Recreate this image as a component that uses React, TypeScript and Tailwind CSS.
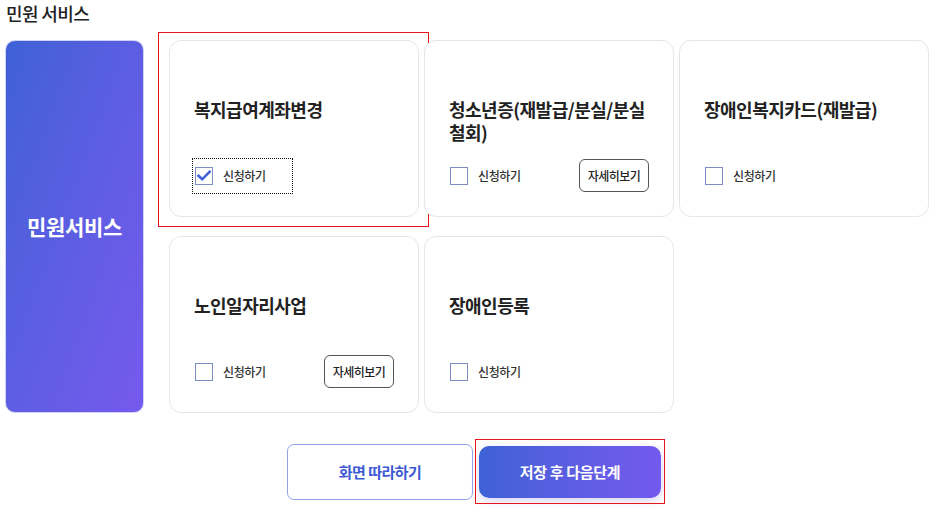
import { useState } from "react";

type Service = {
  id: string;
  title: string;
  detail: boolean;
};

const services: Service[] = [
  { id: "s1", title: "복지급여계좌변경", detail: false },
  { id: "s2", title: "청소년증(재발급/분실/분실철회)", detail: true },
  { id: "s3", title: "장애인복지카드(재발급)", detail: false },
  { id: "s4", title: "노인일자리사업", detail: true },
  { id: "s5", title: "장애인등록", detail: false },
];

function CheckBox({ checked }: { checked: boolean }) {
  return (
    <span className="flex h-[18px] w-[18px] items-center justify-center border border-[#7d8cc2] bg-white">
      {checked && (
        <svg width="14" height="12" viewBox="0 0 14 12" fill="none">
          <path
            d="M1.5 5.8 L5.2 9.3 L12.6 1.8"
            stroke="#3f62d8"
            strokeWidth="2.6"
            strokeLinecap="square"
          />
        </svg>
      )}
    </span>
  );
}

export default function App() {
  const [checked, setChecked] = useState<Record<string, boolean>>({ s1: true });

  return (
    <div
      className="h-[516px] w-[936px] bg-white px-[5px] text-[#222]"
      style={{ fontFamily: '"Noto Sans CJK KR", "Noto Sans", sans-serif' }}
    >
      <div className="h-[40px] pl-[1px] text-[18px] font-medium leading-[26px] tracking-[-0.6px] text-[#222]">
        민원 서비스
      </div>

      <div className="flex gap-[25px]">
        {/* 왼쪽 라벨 */}
        <div className="flex h-[373px] w-[139px] items-center justify-center rounded-[10px] border border-[#cfd2f7] bg-linear-to-br from-[#3e61d6] to-[#7659ee] text-[21px] font-bold tracking-[-0.3px] text-white">
          민원서비스
        </div>

        {/* 서비스 카드 */}
        <div className="grid grid-cols-[250px_250px_250px] gap-x-[5px] gap-y-[19px]">
          {services.map((item, idx) => (
            <div key={item.id} className="relative">
              {idx === 0 && (
                <span className="pointer-events-none absolute -bottom-[10px] -left-[11px] -right-[10px] -top-[8px] border-[1.5px] border-[#e8141c]" />
              )}
              <div className="flex h-[177px] flex-col rounded-[12px] border border-[#e6e6e6] bg-white px-[24px] pt-[57px]">
                <div className="h-[50px] text-[18px] font-bold leading-[23px] tracking-[-0.5px] text-[#222]">
                  {item.title}
                </div>
                <div className="mt-[11px] flex h-[33px] items-center justify-between">
                  <button
                    onClick={() =>
                      setChecked((prev) => ({ ...prev, [item.id]: !prev[item.id] }))
                    }
                    className={`-ml-[2px] flex h-[36px] items-center gap-[10px] pl-[2px] pr-[26px] ${
                      idx === 0 ? "border border-dotted border-[#111]" : "border border-transparent"
                    }`}
                  >
                    <CheckBox checked={!!checked[item.id]} />
                    <span className="text-[12px] font-medium tracking-[-0.4px] text-[#333]">
                      신청하기
                    </span>
                  </button>
                  {item.detail && (
                    <button className="h-[33px] w-[70px] rounded-[6px] border border-[#555] bg-white text-[12px] font-medium tracking-[-0.5px] text-[#222]">
                      자세히보기
                    </button>
                  )}
                </div>
              </div>
            </div>
          ))}
        </div>
      </div>

      {/* 하단 버튼 */}
      <div className="mt-[31px] flex items-center justify-center gap-[6px] pl-[12px]">
        <button className="h-[56px] w-[186px] rounded-[7px] border border-[#93a3ea] bg-white text-[15px] font-bold tracking-[-0.5px] text-[#3d5bd4]">
          화면 따라하기
        </button>
        <div className="relative">
          <span className="pointer-events-none absolute -bottom-[6px] -left-[4px] -right-[4px] -top-[7px] border-[1.5px] border-[#e8141c]" />
          <button className="h-[52px] w-[182px] rounded-[10px] bg-linear-to-r from-[#3e61d6] to-[#7459ee] text-[15px] font-bold tracking-[-0.3px] text-white shadow-[0_3px_8px_rgba(90,90,220,0.25)]">
            저장 후 다음단계
          </button>
        </div>
      </div>
    </div>
  );
}
